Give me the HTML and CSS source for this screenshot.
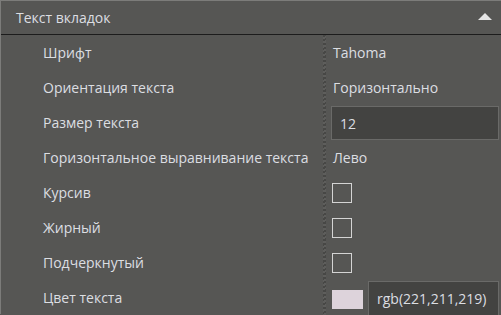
FILE: index.html
```html
<!DOCTYPE html>
<html lang="ru">
<head>
    <meta charset="UTF-8">
    <title>Текст вкладок</title>
    <link rel="stylesheet" href="styles.css">
</head>
<body>
    <div class="panel">
        <!-- Заголовок секции -->
        <div class="panel-header">
            <span>Текст вкладок</span>
            <span class="arrow"></span>
        </div>

        <!-- Свойства -->
        <div class="props">
            <div class="divider"></div>

            <div class="label">Шрифт</div>
            <div class="value">Tahoma</div>

            <div class="label">Ориентация текста</div>
            <div class="value">Горизонтально</div>

            <div class="label">Размер текста</div>
            <div class="value"><div class="input">12</div></div>

            <div class="label">Горизонтальное выравнивание текста</div>
            <div class="value">Лево</div>

            <div class="label">Курсив</div>
            <div class="value"><span class="check"></span></div>

            <div class="label">Жирный</div>
            <div class="value"><span class="check"></span></div>

            <div class="label">Подчеркнутый</div>
            <div class="value"><span class="check"></span></div>

            <div class="label">Цвет текста</div>
            <div class="value color-value">
                <span class="swatch" style="background-color: rgb(221,211,219);"></span>
                <div class="input color-input">rgb(221,211,219)</div>
            </div>
        </div>
    </div>
</body>
</html>
```

FILE: styles.css
```css
    body {
        margin: 0;
        padding: 0;
        background-color: #565654;
        font-family: "Open Sans", Arial, sans-serif;
        font-size: 14px;
        color: #dcdee2;
        width: 501px;
        height: 315px;
        overflow: hidden;
    }

    .panel {
        border-top: 1px solid #7c7c7a;
        border-left: 1px solid #7c7c7a;
        height: 314px;
        box-sizing: border-box;
    }

    .panel-header {
        height: 33px;
        display: flex;
        align-items: center;
        justify-content: space-between;
        padding: 0 9px 0 15px;
        border-bottom: 1px solid #1c1c1c;
    }

    .arrow {
        width: 0;
        height: 0;
        border-left: 7px solid transparent;
        border-right: 7px solid transparent;
        border-bottom: 7px solid #e6e6e6;
        margin-bottom: 2px;
    }

    .props {
        display: grid;
        grid-template-columns: 321px 5px 1fr;
        grid-auto-rows: 35px;
    }

    .divider {
        grid-column: 2;
        grid-row: 1 / span 8;
        background: repeating-linear-gradient(160deg, #474745 0 2px, #5e5e5c 2px 4px);
        width: 3px;
        margin-left: 1px;
    }

    .label {
        grid-column: 1;
        display: flex;
        align-items: center;
        padding-left: 42px;
        white-space: nowrap;
    }

    .value {
        grid-column: 3;
        display: flex;
        align-items: center;
        padding-left: 6px;
    }

    .input {
        box-sizing: border-box;
        height: 34px;
        width: 100%;
        background-color: #434341;
        border: 1px solid #6a6a68;
        display: flex;
        align-items: center;
        padding-left: 8px;
        margin-left: -2px;
        margin-top: 1px;
    }

    .check {
        box-sizing: border-box;
        width: 20px;
        height: 20px;
        border: 1px solid #d4d4d4;
        margin-left: -1px;
    }

    .color-value {
        gap: 5px;
    }

    .swatch {
        width: 31px;
        height: 19px;
        margin-left: -1px;
        margin-top: 3px;
        flex-shrink: 0;
    }

    .color-input {
        flex: 1;
        height: 35px;
        margin: 1px 2px 0 0;
        padding-left: 8px;
    }
```
